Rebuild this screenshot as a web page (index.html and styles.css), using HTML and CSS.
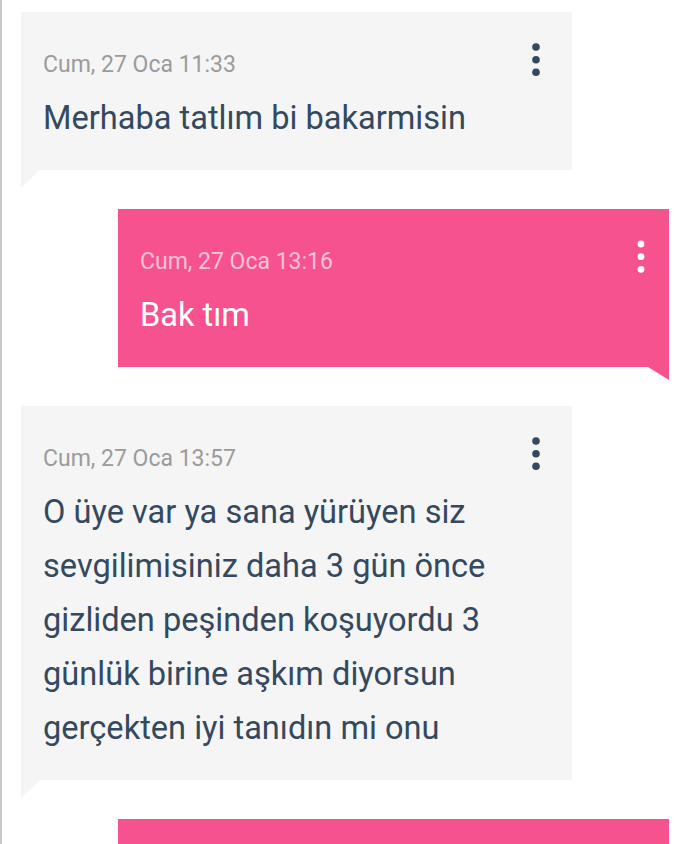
FILE: index.html
```html
<!DOCTYPE html>
<html lang="tr">
<head>
    <meta charset="UTF-8">
    <meta name="viewport" content="width=device-width, initial-scale=1.0">
    <title>Mesajlar</title>
    <link rel="stylesheet" href="styles.css">
</head>
<body>
    <div class="thread">
        <div class="msg msg-in">
            <div class="msg-head">
                <span class="msg-time">Cum, 27 Oca 11:33</span>
                <svg class="dots" width="8" height="34" viewBox="0 0 8 34"><circle cx="4" cy="4" r="3.8"/><circle cx="4" cy="16.7" r="3.8"/><circle cx="4" cy="29.3" r="3.8"/></svg>
            </div>
            <p class="msg-text">Merhaba tatlım bi bakarmisin</p>
        </div>

        <div class="msg msg-out">
            <div class="msg-head">
                <span class="msg-time">Cum, 27 Oca 13:16</span>
                <svg class="dots" width="8" height="34" viewBox="0 0 8 34"><circle cx="4" cy="4" r="3.4"/><circle cx="4" cy="16.7" r="3.4"/><circle cx="4" cy="29.3" r="3.4"/></svg>
            </div>
            <p class="msg-text">Bak tım</p>
        </div>

        <div class="msg msg-in">
            <div class="msg-head">
                <span class="msg-time">Cum, 27 Oca 13:57</span>
                <svg class="dots" width="8" height="34" viewBox="0 0 8 34"><circle cx="4" cy="4" r="3.8"/><circle cx="4" cy="16.7" r="3.8"/><circle cx="4" cy="29.3" r="3.8"/></svg>
            </div>
            <p class="msg-text">O üye var ya sana yürüyen siz sevgilimisiniz daha 3 gün önce gizliden peşinden koşuyordu 3 günlük birine aşkım diyorsun gerçekten iyi tanıdın mi onu</p>
        </div>

        <!-- next message, only its top edge is in view -->
        <div class="msg msg-out msg-next"></div>
    </div>
</body>
</html>
```

FILE: styles.css
```css
body {
    margin: 0;
    padding: 0;
    background-color: #fff;
    font-family: Roboto, "Noto Sans", sans-serif;
    overflow: hidden;
}
.thread {
    min-height: 100vh;
    border-left: 2px solid #c9c9c9;
    padding-top: 12px;
    display: flex;
    flex-direction: column;
    gap: 39px;
}
.msg {
    position: relative;
    width: 551px;
    box-sizing: border-box;
    padding: 38px 22px 25px;
}
.msg-in {
    margin-left: 19px;
    background-color: #f5f5f5;
}
.msg-out {
    margin-left: 116px;
    background-color: #f5528f;
}
.msg-next {
    height: 158px;
}
.msg-in::after,
.msg-out::after {
    content: "";
    position: absolute;
    top: 100%;
}
.msg-in::after {
    left: 0;
    width: 19px;
    height: 18px;
    background-color: #f5f5f5;
    clip-path: polygon(0 0, 100% 0, 0 100%);
}
.msg-out::after {
    right: 0;
    width: 21px;
    height: 13px;
    background-color: #f5528f;
    clip-path: polygon(0 0, 100% 0, 100% 100%);
}
.msg-head {
    display: flex;
    justify-content: space-between;
    align-items: flex-start;
    height: 30px;
}
.msg-time {
    font-size: 23px;
    line-height: 30px;
    color: #9b9b9b;
}
.dots {
    margin-top: -7px;
    margin-right: 10px;
    fill: #34495e;
}
.msg-text {
    margin: 11px 0 0;
    font-size: 32.6px;
    line-height: 54px;
    color: #34495e;
}
.msg-out .msg-time {
    color: #fbc3d8;
}
.msg-out .msg-text {
    color: #fff;
}
.msg-out .dots {
    margin-right: 2px;
    fill: #fff;
}
```
